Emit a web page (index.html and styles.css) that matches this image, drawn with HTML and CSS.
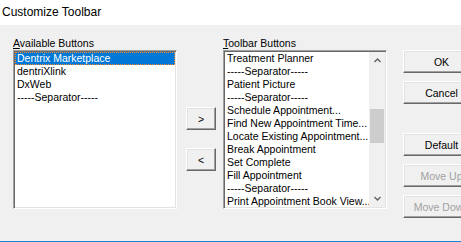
FILE: index.html
```html
<html>
    <head>
        <title>Customize Toolbar</title>
        <link rel="stylesheet" href="styles.css">
    </head>
    <body>
        <div class="window">
            <div class="titlebar">Customize Toolbar</div>

            <div class="dialog">
                <div class="column">
                    <p class="label"><u>A</u>vailable Buttons</p>
                    <div class="listbox">
                        <div class="items">
                            <div class="item selected">Dentrix Marketplace</div>
                            <div class="item">dentriXlink</div>
                            <div class="item">DxWeb</div>
                            <div class="item">-----Separator-----</div>
                        </div>
                    </div>
                </div>

                <div class="movers">
                    <button class="btn small">&gt;</button>
                    <button class="btn small">&lt;</button>
                </div>

                <div class="column">
                    <p class="label"><u>T</u>oolbar Buttons</p>
                    <div class="listbox">
                        <div class="items">
                            <div class="item">Treatment Planner</div>
                            <div class="item">-----Separator-----</div>
                            <div class="item">Patient Picture</div>
                            <div class="item">-----Separator-----</div>
                            <div class="item">Schedule Appointment...</div>
                            <div class="item">Find New Appointment Time...</div>
                            <div class="item">Locate Existing Appointment...</div>
                            <div class="item">Break Appointment</div>
                            <div class="item">Set Complete</div>
                            <div class="item">Fill Appointment</div>
                            <div class="item">-----Separator-----</div>
                            <div class="item">Print Appointment Book View...</div>
                        </div>
                        <div class="scrollbar">
                            <div class="arrow">
                                <svg width="7" height="5" viewBox="0 0 7 5"><polyline points="0.5,4 3.5,1 6.5,4" fill="none" stroke="#606060" stroke-width="1.4"/></svg>
                            </div>
                            <div class="track"><div class="thumb"></div></div>
                            <div class="arrow">
                                <svg width="7" height="5" viewBox="0 0 7 5"><polyline points="0.5,1 3.5,4 6.5,1" fill="none" stroke="#606060" stroke-width="1.4"/></svg>
                            </div>
                        </div>
                    </div>
                </div>

                <div class="actions">
                    <button class="btn wide">OK</button>
                    <button class="btn wide">Cancel</button>
                    <button class="btn wide spaced">Default</button>
                    <button class="btn wide" disabled>Move Up</button>
                    <button class="btn wide" disabled>Move Down</button>
                </div>
            </div>
        </div>
    </body>
</html>
```

FILE: styles.css
```css
body{
    margin: 0;
    background-color: #f0f0f0;
    font-family: "Liberation Sans", Arial, sans-serif;
    font-size: 10.5px;
    color: #000;
    overflow: hidden;
}

.window{
    width: 461px;
    height: 242px;
    box-sizing: border-box;
    border-bottom: 1px solid #1883d7;
    display: flex;
    flex-direction: column;
}

.titlebar{
    height: 25px;
    background-color: #fff;
    font-size: 12px;
    line-height: 25px;
    padding-left: 2px;
    flex-shrink: 0;
}

.dialog{
    display: flex;
    padding: 12px 0 0 13px;
}

.column{
    display: flex;
    flex-direction: column;
}

.label{
    margin: 0;
    height: 13px;
    line-height: 13px;
}

.listbox{
    width: 164px;
    height: 159px;
    box-sizing: border-box;
    background-color: #fff;
    border-top: 1px solid #a0a0a0;
    border-left: 1px solid #a0a0a0;
    border-right: 1px solid #fff;
    border-bottom: 1px solid #fff;
    box-shadow: inset 1px 1px #696969, inset -1px -1px #e3e3e3;
    padding: 1px;
    display: flex;
    overflow: hidden;
}

.items{
    flex: 1;
    min-width: 0;
    overflow: hidden;
}

.item{
    height: 13px;
    line-height: 13px;
    padding-left: 2px;
    white-space: nowrap;
    overflow: hidden;
}

.selected{
    background-color: #0078d7;
    color: #fff;
    outline: 1px dotted #ff8c20;
    outline-offset: -1px;
}

.scrollbar{
    width: 16px;
    flex-shrink: 0;
    background-color: #f0f0f0;
    display: flex;
    flex-direction: column;
}

.arrow{
    height: 17px;
    display: flex;
    align-items: center;
    justify-content: center;
}

.track{
    flex: 1;
    padding: 0 1px;
}

.thumb{
    margin-top: 40px;
    height: 34px;
    background-color: #cdcdcd;
}

.movers{
    display: flex;
    flex-direction: column;
    gap: 18px;
    margin: 70px 7px 0 9px;
}

.btn{
    font-family: "Liberation Sans", Arial, sans-serif;
    font-size: 10.5px;
    color: #000;
    background-color: #f0f0f0;
    border-top: 1px solid #fff;
    border-left: 1px solid #fff;
    border-right: 1px solid #696969;
    border-bottom: 1px solid #696969;
    box-shadow: inset -1px -1px #a0a0a0, inset 1px 1px #e3e3e3;
    padding: 0;
    box-sizing: border-box;
}

.btn:disabled{
    color: #a0a0a0;
}

.small{
    width: 30px;
    height: 23px;
}

.actions{
    display: flex;
    flex-direction: column;
    gap: 8px;
    margin: 13px 0 0 16px;
}

.wide{
    width: 77px;
    height: 23px;
    flex-shrink: 0;
}

.spaced{
    margin-top: 21px;
}
```
